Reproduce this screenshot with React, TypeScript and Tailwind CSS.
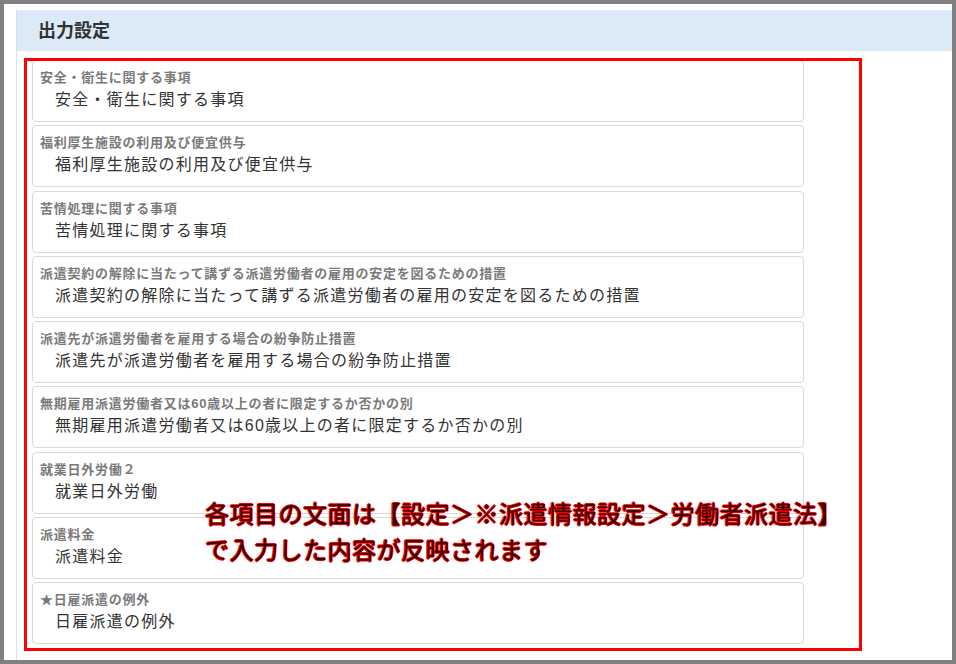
const font = { fontFamily: '"Liberation Sans", "Noto Sans CJK JP", sans-serif' };

const items = [
  { label: '安全・衛生に関する事項', value: '安全・衛生に関する事項' },
  { label: '福利厚生施設の利用及び便宜供与', value: '福利厚生施設の利用及び便宜供与' },
  { label: '苦情処理に関する事項', value: '苦情処理に関する事項' },
  {
    label: '派遣契約の解除に当たって講ずる派遣労働者の雇用の安定を図るための措置',
    value: '派遣契約の解除に当たって講ずる派遣労働者の雇用の安定を図るための措置',
  },
  { label: '派遣先が派遣労働者を雇用する場合の紛争防止措置', value: '派遣先が派遣労働者を雇用する場合の紛争防止措置' },
  {
    label: '無期雇用派遣労働者又は60歳以上の者に限定するか否かの別',
    value: '無期雇用派遣労働者又は60歳以上の者に限定するか否かの別',
  },
  { label: '就業日外労働２', value: '就業日外労働' },
  { label: '派遣料金', value: '派遣料金' },
  { label: '★日雇派遣の例外', value: '日雇派遣の例外' },
];

export default function App() {
  return (
    <div
      className="relative w-[956px] h-[664px] box-border border-4 border-[#808080] bg-white overflow-hidden"
      style={font}
    >
      <div className="pl-3 pt-[6px] h-full">
        <div className="h-full border-l border-[#d3e2f1]">
          {/* Panel header */}
          <div className="h-[41px] bg-[#dceaf8] border-t border-[#e6eef7] flex items-center pl-[21px]">
            <h2 className="text-[18px] font-bold text-[#333]">出力設定</h2>
          </div>

          {/* Fields */}
          <div className="pl-[15px] pt-[9px] flex flex-col gap-[3.25px]">
            {items.map((item) => (
              <div
                key={item.label}
                className="w-[772px] h-[62px] border border-[#d9d9d9] rounded-[4px] pl-[7px] pt-[8px] box-border"
              >
                <p className="text-[13px] leading-[18px] font-bold text-[#7a7a7a] tracking-[0.75px]">{item.label}</p>
                <p className="mt-[2px] pl-[15px] text-[16px] leading-[22px] text-[#333] tracking-[1.25px]">{item.value}</p>
              </div>
            ))}
          </div>
        </div>
      </div>

      {/* Annotation overlay */}
      <div className="absolute left-[20px] top-[54px] w-[838px] h-[593px] border-[3px] border-[#ff0000] pointer-events-none" />
      <div
        className="absolute left-[201px] top-[493px] text-[24px] leading-[36px] font-normal tracking-[0.5px] text-[#300000] whitespace-nowrap [text-shadow:1px_0_0_#ff0000,-1px_0_0_#ff0000,0_1px_0_#ff0000,0_-1px_0_#ff0000]"
      >
        <p>各項目の文面は【設定＞※派遣情報設定＞労働者派遣法】</p>
        <p>で入力した内容が反映されます</p>
      </div>
    </div>
  );
}
